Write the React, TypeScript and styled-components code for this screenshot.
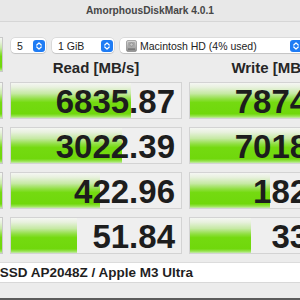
import React from "react";
import styled, { createGlobalStyle } from "styled-components";

// resultados de la prueba: lectura y escritura en MB/s
const results = [
  { read: 6835.87, write: 7874.53 },
  { read: 3022.39, write: 7018.12 },
  { read: 422.96, write: 182.47 },
  { read: 51.84, write: 33.58 },
];

// la barra va en escala logaritmica
const barWidth = (v: number) => Math.round(25.2 * Math.log10(v) + 23);

const GlobalStyle = createGlobalStyle`
  html, body {
    margin: 0;
    padding: 0;
    width: 300px;
    height: 300px;
    overflow: hidden;
    background: #ececec;
    font-family: "Liberation Sans", Arial, sans-serif;
  }
`;

const Window = styled.div`
  width: 300px;
  height: 300px;
  display: flex;
  flex-direction: column;
  overflow: hidden;
  background: #ececec;
`;

const TitleBar = styled.div`
  height: 21px;
  flex: none;
  background: #e8e8e8;
  border-bottom: 1px solid #d6d6d6;
  display: flex;
  align-items: center;
  justify-content: center;
  font-size: 10.2px;
  font-weight: bold;
  color: #464646;
`;

const columns = `
  display: grid;
  grid-template-columns: 80px 172px 172px;
  column-gap: 7px;
  margin-left: -77px;
`;

const TopGrid = styled.div`
  ${columns}
  grid-template-rows: 16px 29px;
  margin-top: 15px;
`;

const green = `linear-gradient(180deg, #f5f6f3 0%, #e8f1de 12%, #c6e9a4 30%, #8fdf40 46%, #74da10 56%, #70d80c 88%, #98e352 95%, #c4ebaa 100%)`;

const AllButton = styled.div`
  grid-column: 1;
  grid-row: 1 / span 2;
  height: 35px;
  box-sizing: border-box;
  border: 1px solid #c9c9c9;
  background: ${green};
`;

const Toolbar = styled.div`
  grid-column: 2 / span 2;
  grid-row: 1;
  display: flex;
  gap: 6px;
  padding: 1px 0 0 1px;
`;

const Popup = styled.div<{ $w: number }>`
  width: ${(p) => p.$w}px;
  height: 15px;
  flex: none;
  box-sizing: border-box;
  background: #fff;
  border-radius: 4px;
  box-shadow: 0 0 0 0.5px rgba(0, 0, 0, 0.14), 0 1px 1px rgba(0, 0, 0, 0.1);
  display: flex;
  align-items: center;
  padding: 0 1.5px 0 6px;
  font-size: 10.5px;
  color: #222;
`;

const PopupLabel = styled.span`
  flex: 1;
  display: flex;
  align-items: center;
  gap: 3px;
  white-space: nowrap;
`;

const Stepper = styled.div`
  width: 12px;
  height: 12px;
  flex: none;
  border-radius: 3px;
  background: #1f7cf4;
  display: flex;
  align-items: center;
  justify-content: center;
`;

const Header = styled.div<{ $col: number }>`
  grid-column: ${(p) => p.$col};
  grid-row: 2;
  display: flex;
  align-items: center;
  justify-content: center;
  padding-bottom: 1px;
  font-size: 15px;
  font-weight: bold;
  color: #262626;
`;

const DataGrid = styled.div`
  ${columns}
  grid-auto-rows: 37px;
  row-gap: 8px;
`;

const SideButton = styled.div`
  box-sizing: border-box;
  border: 1px solid #c9c9c9;
  background: ${green};
`;

const Cell = styled.div`
  box-sizing: border-box;
  border: 1px solid #d3d3d3;
  background-color: #efefef;
  background-image: ${green};
  background-repeat: no-repeat;
  display: flex;
  align-items: center;
  justify-content: flex-end;
  padding: 3px 6px 0 0;
  font-size: 33px;
  font-weight: bold;
  color: #1d1d1d;
  line-height: 34px;
`;

const InfoField = styled.div`
  margin: 8px 0 0 -77px;
  width: 460px;
  height: 21px;
  flex: none;
  box-sizing: border-box;
  background: #fff;
  border-top: 1px solid #dcdcdc;
  border-bottom: 1px solid #d8d8d8;
  padding-left: 28px;
  display: flex;
  align-items: center;
  font-size: 13.5px;
  font-weight: bold;
  color: #1f1f1f;
  white-space: nowrap;
`;

const Filler = styled.div`
  flex: 1;
`;

const BottomEdge = styled.div`
  height: 2px;
  flex: none;
  background: #5c5c5c;
`;

const Chevrons = () => (
  <svg width="12" height="12" viewBox="0 0 12 12">
    <path d="M3.8 5 L6 2.9 L8.2 5 M3.8 7 L6 9.1 L8.2 7" fill="none" stroke="#fff" strokeWidth="1.3" strokeLinecap="round" strokeLinejoin="round" />
  </svg>
);

const DriveIcon = () => (
  <svg width="11" height="12" viewBox="0 0 11 12">
    <defs>
      <linearGradient id="hd" x1="0" y1="0" x2="0" y2="1">
        <stop offset="0" stopColor="#d9d9d9" />
        <stop offset="1" stopColor="#8d8d8d" />
      </linearGradient>
    </defs>
    <rect x="0.5" y="0.5" width="10" height="11" rx="1.5" fill="url(#hd)" stroke="#7a7a7a" strokeWidth="0.6" />
    <rect x="2" y="2" width="7" height="5" rx="1" fill="#a8a8a8" />
    <circle cx="5.5" cy="4.5" r="1.6" fill="#c8c8c8" stroke="#707070" strokeWidth="0.4" />
    <rect x="2" y="8.5" width="7" height="1.2" fill="#6a6a6a" />
  </svg>
);

const App: React.FC = () => {
  return (
    <Window>
      <GlobalStyle />
      <TitleBar>AmorphousDiskMark 4.0.1</TitleBar>
      <TopGrid>
        <AllButton />
        <Toolbar>
          <Popup $w={35}>
            <PopupLabel>5</PopupLabel>
            <Stepper><Chevrons /></Stepper>
          </Popup>
          <Popup $w={62}>
            <PopupLabel>1 GiB</PopupLabel>
            <Stepper><Chevrons /></Stepper>
          </Popup>
          <Popup $w={183}>
            <PopupLabel><DriveIcon />Macintosh HD (4% used)</PopupLabel>
            <Stepper><Chevrons /></Stepper>
          </Popup>
        </Toolbar>
        <Header $col={2}>Read [MB/s]</Header>
        <Header $col={3}>Write [MB/s]</Header>
      </TopGrid>
      <DataGrid>
        {results.map((r, i) => (
          <React.Fragment key={i}>
            <SideButton />
            <Cell style={{ backgroundSize: `${barWidth(r.read)}px 100%` }}>{r.read.toFixed(2)}</Cell>
            <Cell style={{ backgroundSize: `${barWidth(r.write)}px 100%` }}>{r.write.toFixed(2)}</Cell>
          </React.Fragment>
        ))}
      </DataGrid>
      <InfoField>APPLE SSD AP2048Z / Apple M3 Ultra</InfoField>
      <Filler />
      <BottomEdge />
    </Window>
  );
};

export default App;
